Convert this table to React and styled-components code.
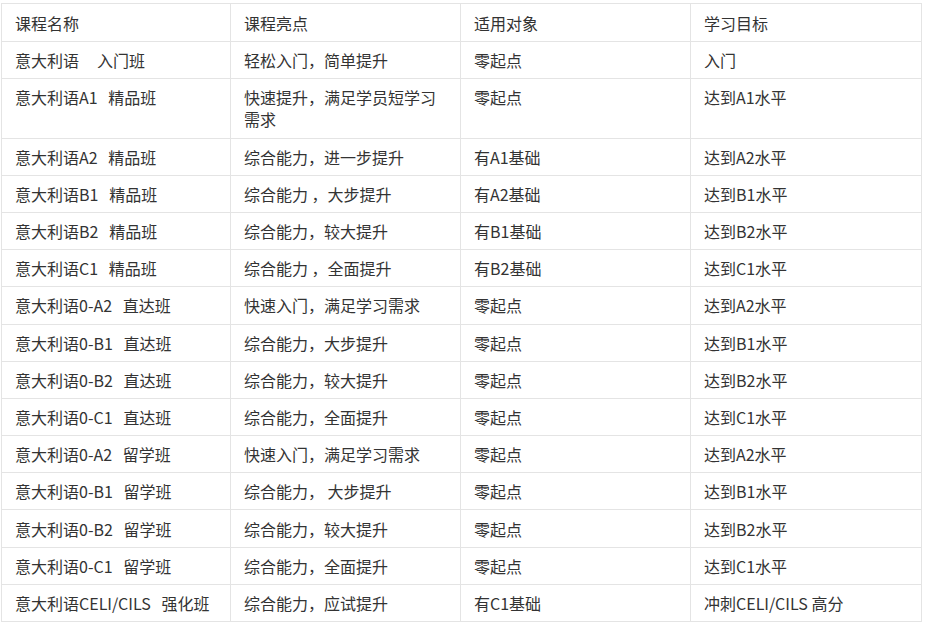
import React from "react";
import styled, { createGlobalStyle } from "styled-components";

const GlobalStyle = createGlobalStyle`
  html, body {
    margin: 0;
    padding: 0;
    background: #ffffff;
  }
  body {
    font-family: "Noto Sans CJK SC", "Noto Sans", sans-serif;
  }
`;

const Page = styled.div`
  padding: 3px 0 0 1px;
`;

const Table = styled.table`
  width: 920px;
  border-collapse: collapse;
  table-layout: fixed;
  font-size: 16px;
  color: #333333;
`;

const Col = styled.col`
  width: ${(p) => p.$w}px;
`;

const Cell = styled.td`
  border: 1px solid #e4e4e4;
  padding: 7.1px 13px;
  line-height: 22px;
  vertical-align: top;
  white-space: pre-wrap;
  text-align: left;
  font-weight: normal;
`;

const HeadCell = styled(Cell).attrs({ as: "th" })`
  padding: 7.6px 13px;
`;

const widths = [229, 230, 230, 231];

const columns = ["课程名称", "课程亮点", "适用对象", "学习目标"];

const rows = [
  ["意大利语\u00a0\u00a0\u00a0\u00a0 入门班", "轻松入门，简单提升", "零起点", "入门"],
  ["意大利语A1\u00a0\u00a0 精品班", "快速提升，满足学员短学习需求", "零起点", "达到A1水平"],
  ["意大利语A2\u00a0\u00a0 精品班", "综合能力，进一步提升", "有A1基础", "达到A2水平"],
  ["意大利语B1\u00a0\u00a0 精品班", "综合能力 ，大步提升", "有A2基础", "达到B1水平"],
  ["意大利语B2\u00a0\u00a0 精品班", "综合能力，较大提升", "有B1基础", "达到B2水平"],
  ["意大利语C1\u00a0\u00a0 精品班", "综合能力 ，全面提升", "有B2基础", "达到C1水平"],
  ["意大利语0-A2\u00a0\u00a0 直达班", "快速入门，满足学习需求", "零起点", "达到A2水平"],
  ["意大利语0-B1\u00a0\u00a0 直达班", "综合能力，大步提升", "零起点", "达到B1水平"],
  ["意大利语0-B2\u00a0\u00a0 直达班", "综合能力，较大提升", "零起点", "达到B2水平"],
  ["意大利语0-C1\u00a0\u00a0 直达班", "综合能力，全面提升", "零起点", "达到C1水平"],
  ["意大利语0-A2\u00a0\u00a0 留学班", "快速入门，满足学习需求", "零起点", "达到A2水平"],
  ["意大利语0-B1\u00a0\u00a0 留学班", "综合能力， 大步提升", "零起点", "达到B1水平"],
  ["意大利语0-B2\u00a0\u00a0 留学班", "综合能力，较大提升", "零起点", "达到B2水平"],
  ["意大利语0-C1\u00a0\u00a0 留学班", "综合能力，全面提升", "零起点", "达到C1水平"],
  ["意大利语CELI/CILS\u00a0\u00a0 强化班", "综合能力，应试提升", "有C1基础", "冲刺CELI/CILS 高分"],
];

const App = () => {
  return (
    <>
      <GlobalStyle />
      <Page>
        <Table>
          <colgroup>
            {widths.map((w, i) => (
              <Col key={i} $w={w} />
            ))}
          </colgroup>
          <thead>
            <tr>
              {columns.map((c) => (
                <HeadCell key={c}>{c}</HeadCell>
              ))}
            </tr>
          </thead>
          <tbody>
            {rows.map((r, i) => (
              <tr key={i}>
                {r.map((v, j) => (
                  <Cell key={j}>{v}</Cell>
                ))}
              </tr>
            ))}
          </tbody>
        </Table>
      </Page>
    </>
  );
};

export default App;
